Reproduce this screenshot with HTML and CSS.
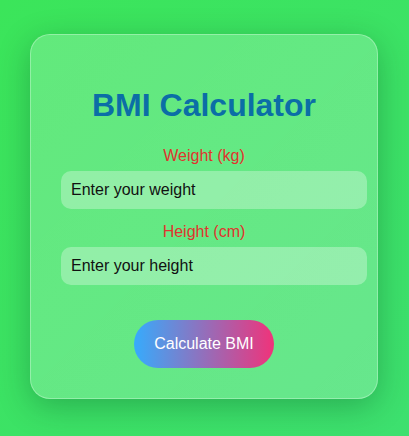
FILE: index.html
```html
<!DOCTYPE html>
<html>
<head>
<meta charset="utf-8">
<link rel="stylesheet" href="styles.css">
</head>
<body>
<div class="card">
  <h1 class="title">BMI Calculator</h1>
  <label class="label" for="w">Weight (kg)</label>
  <input class="field" id="w" type="text" placeholder="Enter your weight">
  <label class="label" for="h">Height (cm)</label>
  <input class="field" id="h" type="text" placeholder="Enter your height">
  <div class="actions">
    <button class="btn">Calculate BMI</button>
  </div>
</div>
</body>
</html>
```

FILE: styles.css
```css
html, body { margin: 0; height: 100%; }
body {
  font-family: "Liberation Sans", Arial, sans-serif;
  background: linear-gradient(135deg, #3be55a 0%, #3de06f 100%);
  display: flex;
  align-items: center;
  justify-content: center;
  min-height: 100vh;
  box-sizing: border-box;
  padding: 0 1px 4px 0;
}
.card {
  width: 286px;
  padding: 30px;
  border-radius: 20px;
  background: linear-gradient(135deg, rgba(255,255,255,0.2), rgba(255,255,255,0.22));
  border: 1px solid rgba(255,255,255,0.3);
  box-shadow: 0 8px 32px rgba(0, 60, 30, 0.3);
  text-align: center;
}
.title {
  font-size: 32px;
  color: #0b6ea6;
  margin: 22px 0 23px;
}
.label {
  display: block;
  color: #e0332e;
  font-size: 16px;
  margin-bottom: 6px;
}
.field {
  display: block;
  padding: 10px;
  height: 38px;
  box-sizing: border-box;
  width: 306px;
  border: none;
  border-radius: 10px;
  background: rgba(255,255,255,0.3);
  font-family: "Liberation Sans", Arial, sans-serif;
  font-size: 16px;
  margin-bottom: 14px;
  outline: none;
}
.field::placeholder { color: #111; opacity: 1; }
.actions { padding-top: 21px; display: flex; justify-content: center; }
.btn {
  width: 140px;
  height: 48px;
  border: none;
  border-radius: 24px;
  background: linear-gradient(90deg, #36abfc, #f0337a);
  color: #fff;
  font-family: "Liberation Sans", Arial, sans-serif;
  font-size: 16px;
}
```
